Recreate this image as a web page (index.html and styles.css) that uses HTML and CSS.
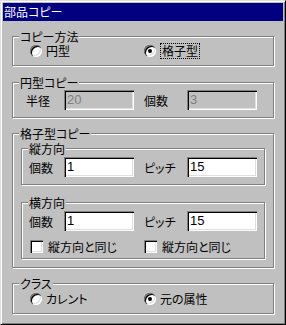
FILE: index.html
```html
<!DOCTYPE html>
<html lang="ja">
<head>
    <meta charset="UTF-8">
    <title>部品コピー</title>
    <link rel="stylesheet" href="styles.css">
</head>
<body>
    <div class="window">
        <div class="titlebar">部品コピー</div>
        <div class="content">
            <div class="group g-method">
                <div class="group-title">コピー方法</div>
                <div class="choice-row">
                    <label class="choice"><span class="radio"></span><span class="choice-text">円型</span></label>
                    <label class="choice"><span class="radio checked"></span><span class="choice-text focus">格子型</span></label>
                </div>
            </div>

            <div class="group g-circle">
                <div class="group-title">円型コピー</div>
                <div class="field-row">
                    <span class="field-label wide">半径</span>
                    <span class="input disabled">20</span>
                    <span class="field-label second">個数</span>
                    <span class="input disabled">3</span>
                </div>
            </div>

            <div class="group g-grid">
                <div class="group-title">格子型コピー</div>
                <div class="group inner g-vert">
                    <div class="group-title">縦方向</div>
                    <div class="field-row">
                        <span class="field-label">個数</span>
                        <span class="input">1</span>
                        <span class="field-label second">ピッチ</span>
                        <span class="input">15</span>
                    </div>
                </div>
                <div class="group inner g-horz">
                    <div class="group-title">横方向</div>
                    <div class="field-row">
                        <span class="field-label">個数</span>
                        <span class="input">1</span>
                        <span class="field-label second">ピッチ</span>
                        <span class="input">15</span>
                    </div>
                    <div class="check-row">
                        <label class="choice"><span class="checkbox"></span><span class="choice-text">縦方向と同じ</span></label>
                        <label class="choice"><span class="checkbox"></span><span class="choice-text">縦方向と同じ</span></label>
                    </div>
                </div>
            </div>

            <div class="group g-class">
                <div class="group-title">クラス</div>
                <div class="choice-row">
                    <label class="choice"><span class="radio"></span><span class="choice-text">カレント</span></label>
                    <label class="choice"><span class="radio checked"></span><span class="choice-text">元の属性</span></label>
                </div>
            </div>
        </div>
    </div>
</body>
</html>
```

FILE: styles.css
```css
body {
    margin: 0;
    font-family: "Noto Sans CJK JP", sans-serif;
    font-size: 12px;
    font-feature-settings: "palt";
    color: #000;
    background: #c0c0c0;
}
.window {
    width: 286px;
    height: 325px;
    box-sizing: border-box;
    border: 1px solid;
    border-color: #dfdfdf #000 #000 #dfdfdf;
    box-shadow: inset 1px 1px #fff, inset -1px -1px #808080;
    padding: 2px;
    background: #c0c0c0;
}
.titlebar {
    height: 18px;
    line-height: 18px;
    background: #000080;
    color: #fff;
    padding-left: 1px;
}
.content {
    padding: 0 9px;
}
.group {
    box-sizing: border-box;
    border: 1px solid #808080;
    box-shadow: inset 1px 1px #fff, 1px 1px #fff;
}
.group-title {
    width: fit-content;
    margin: -7px 0 0 6px;
    padding: 0 1px;
    line-height: 13px;
    background: #c0c0c0;
}
.g-method {
    margin-top: 15px;
    height: 30px;
}
.g-circle {
    margin-top: 16px;
    height: 36px;
}
.g-grid {
    margin-top: 15px;
    height: 135px;
}
.g-class {
    margin-top: 15px;
    height: 31px;
}
.inner {
    margin: 8px 8px 0;
}
.inner .group-title {
    margin-left: 6px;
}
.g-vert {
    height: 37px;
}
.g-horz {
    margin-top: 17px;
    height: 57px;
}

/* radios and checkboxes */
.choice-row {
    display: flex;
    align-items: center;
    height: 16px;
    padding-left: 17px;
}
.g-class .choice-row {
    margin-top: 1px;
}
.check-row {
    display: flex;
    align-items: center;
    height: 13px;
    margin-top: 9px;
    padding-left: 8px;
}
.choice {
    display: flex;
    align-items: center;
}
.choice:first-child {
    width: 114px;
}
.choice-text {
    margin-left: 4px;
    line-height: 14px;
}
.check-row .choice-text {
    margin-left: 5px;
}
.focus {
    border: 1px dotted #000;
    padding: 0 1px;
}
.radio {
    position: relative;
    width: 12px;
    height: 12px;
    flex: none;
    border-radius: 50%;
    background: #fff;
    box-shadow: inset 1px 1px #808080, inset 2px 2px #000, inset -1px -1px #fff, inset -2px -2px #dfdfdf;
}
.radio.checked::after {
    content: "";
    position: absolute;
    left: 4px;
    top: 4px;
    width: 4px;
    height: 4px;
    border-radius: 50%;
    background: #000;
}
.checkbox {
    width: 13px;
    height: 13px;
    flex: none;
    background: #fff;
    box-shadow: inset 1px 1px #808080, inset 2px 2px #000, inset -1px -1px #fff, inset -2px -2px #dfdfdf;
}

/* text fields */
.field-row {
    display: flex;
    align-items: center;
    height: 20px;
    margin-top: 2px;
    padding-left: 7px;
}
.g-circle .field-row {
    margin-top: 1px;
    padding-left: 13px;
}
.field-label {
    width: 35px;
    flex: none;
}
.field-label.wide {
    width: 38px;
}
.field-label.second {
    width: 43px;
    margin-left: 10px;
}
.input {
    box-sizing: border-box;
    width: 70px;
    height: 20px;
    flex: none;
    padding: 3px 0 0 3px;
    background: #fff;
    box-shadow: inset 1px 1px #808080, inset 2px 2px #000, inset -1px -1px #fff, inset -2px -2px #dfdfdf;
    font-family: "Liberation Sans", sans-serif;
    font-size: 13px;
    line-height: 14px;
}
.input.disabled {
    background: #c0c0c0;
    color: #808080;
}
```
